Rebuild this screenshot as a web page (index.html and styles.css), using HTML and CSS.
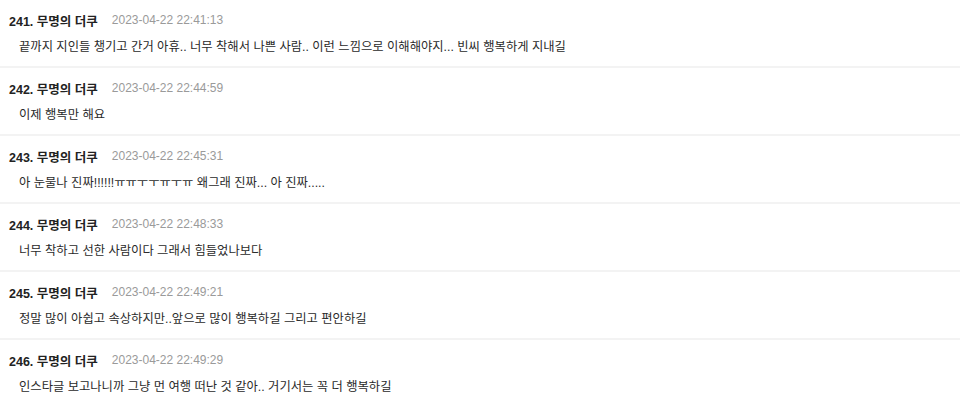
FILE: index.html
```html
<!DOCTYPE html>
<html lang="ko">
<head>
  <meta charset="UTF-8">
  <meta name="viewport" content="width=device-width, initial-scale=1.0">
  <title>댓글</title>
  <link rel="stylesheet" href="styles.css">
</head>
<body>
  <ul class="comments">
    <li class="comment">
      <div class="comment-head">
        <span class="author">241. 무명의 더쿠</span>
        <span class="date">2023-04-22 22:41:13</span>
      </div>
      <p class="comment-body">끝까지 지인들 챙기고 간거 아휴.. 너무 착해서 나쁜 사람.. 이런 느낌으로 이해해야지... 빈씨 행복하게 지내길</p>
    </li>
    <li class="comment">
      <div class="comment-head">
        <span class="author">242. 무명의 더쿠</span>
        <span class="date">2023-04-22 22:44:59</span>
      </div>
      <p class="comment-body">이제 행복만 해요</p>
    </li>
    <li class="comment">
      <div class="comment-head">
        <span class="author">243. 무명의 더쿠</span>
        <span class="date">2023-04-22 22:45:31</span>
      </div>
      <p class="comment-body">아 눈물나 진짜!!!!!!ㅠㅠㅜㅜㅠㅜㅠ 왜그래 진짜... 아 진짜.....</p>
    </li>
    <li class="comment">
      <div class="comment-head">
        <span class="author">244. 무명의 더쿠</span>
        <span class="date">2023-04-22 22:48:33</span>
      </div>
      <p class="comment-body">너무 착하고 선한 사람이다 그래서 힘들었나보다</p>
    </li>
    <li class="comment">
      <div class="comment-head">
        <span class="author">245. 무명의 더쿠</span>
        <span class="date">2023-04-22 22:49:21</span>
      </div>
      <p class="comment-body">정말 많이 아쉽고 속상하지만..앞으로 많이 행복하길 그리고 편안하길</p>
    </li>
    <li class="comment">
      <div class="comment-head">
        <span class="author">246. 무명의 더쿠</span>
        <span class="date">2023-04-22 22:49:29</span>
      </div>
      <p class="comment-body">인스타글 보고나니까 그냥 먼 여행 떠난 것 같아.. 거기서는 꼭 더 행복하길</p>
    </li>
  </ul>
</body>
</html>
```

FILE: styles.css
```css
/* comment list */
body {
  margin: 0;
  background-color: #fff;
  color: #222;
  font-family: "Liberation Sans", "Noto Sans CJK KR", sans-serif;
}

.comments {
  list-style: none;
  margin: 0;
  padding: 0;
}

.comment {
  padding: 11px 9px 10px;
  border-bottom: 2px solid #f3f3f3;
}

.comment-head {
  display: flex;
  align-items: center;
  gap: 14px;
  height: 18px;
}

.author {
  font-size: 12.5px;
  font-weight: bold;
  color: #222;
}

.date {
  font-size: 12px;
  color: #9a9a9a;
}

.comment-body {
  margin: 9px 0 0;
  padding-left: 10px;
  font-size: 12.3px;
  line-height: 18px;
  color: #2a2a2a;
}
```
